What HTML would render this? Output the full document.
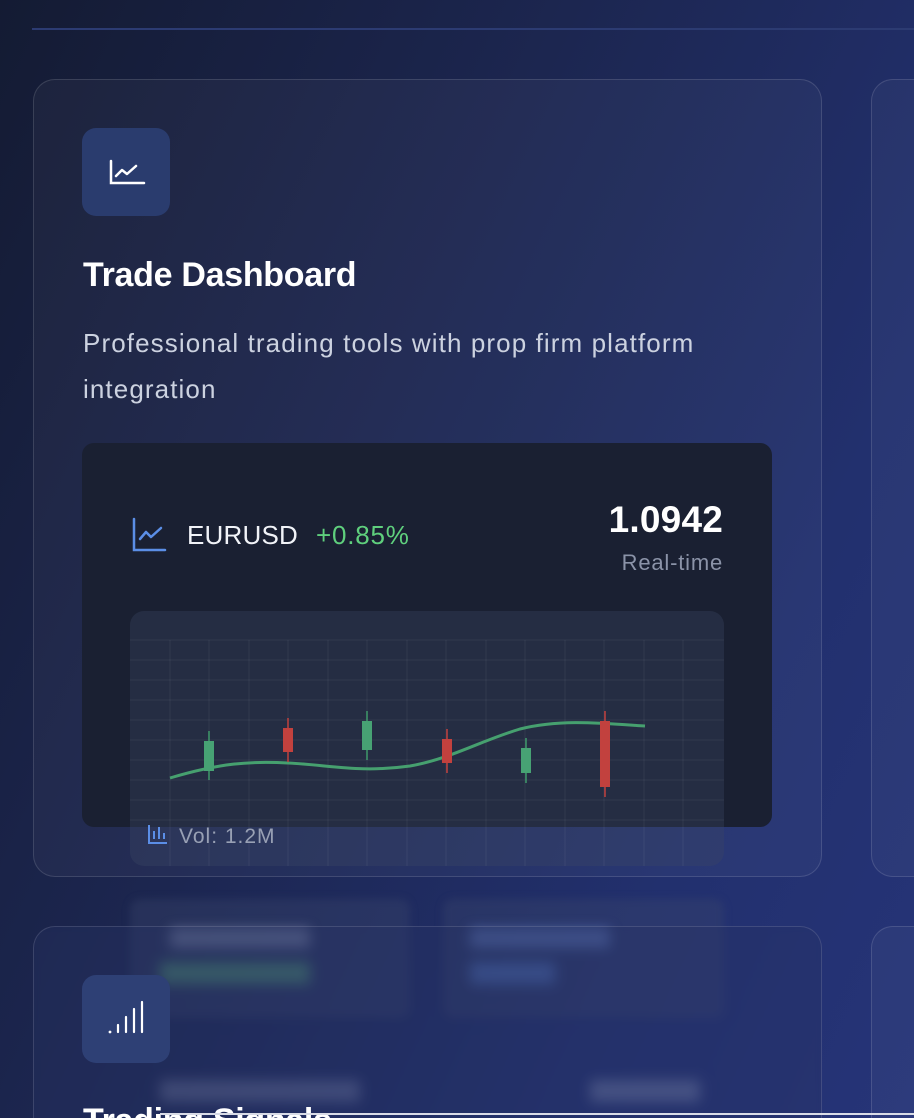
<!DOCTYPE html>
<html style="width:914px;height:1118px;overflow:hidden"><head><meta charset="utf-8"><style>
*{margin:0;padding:0;box-sizing:border-box}
body{width:914px;height:1118px;overflow:hidden;font-family:"Liberation Sans",sans-serif;background:#1c2650;color:#fff}
#w{position:relative;width:914px;height:1118px;overflow:hidden;background:linear-gradient(115deg,#141b33 0%,#1c2650 40%,#22306e 75%,#263478 100%)}
.topline{position:absolute;left:32px;top:28px;right:0;height:2px;background:#2c3b72}
.card{position:absolute;border:1.5px solid rgba(255,255,255,0.13);border-radius:22px;background:rgba(255,255,255,0.035)}
.ibox{position:absolute;width:88px;height:88px;border-radius:14px;background:#2a3c6e}
.t{position:absolute;font-weight:bold;font-size:34px;letter-spacing:-0.3px}
.d{position:absolute;font-size:26px;letter-spacing:1.1px;line-height:46px;color:#ccd2e0;white-space:nowrap}
.panel{position:absolute;left:82px;top:443px;width:690px;height:384px;border-radius:12px;background:#1a2032}
.chart{position:absolute;left:130px;top:611px;width:594px;height:255px;border-radius:14px;background:rgba(60,72,100,0.35);overflow:hidden}
.stat{position:absolute;border-radius:10px;background:rgba(60,72,110,0.35);filter:blur(4px)}
</style></head><body><div id="w">
<div class="topline"></div>
<div class="card" style="left:33px;top:79px;width:789px;height:798px"></div>
<div class="card" style="left:871px;top:79px;width:100px;height:798px"></div>
<div class="ibox" style="left:82px;top:128px"><svg width="88" height="88" viewBox="0 0 88 88"><path d="M29 33v22h33" stroke="#fff" stroke-width="2.5" fill="none" stroke-linecap="round"/><path d="M34 48l6-6 5 4 9-8" stroke="#fff" stroke-width="2.5" fill="none" stroke-linecap="round" stroke-linejoin="round"/></svg></div>
<div class="t" style="left:83px;top:256px">Trade Dashboard</div>
<div class="d" style="left:83px;top:320px">Professional trading tools with prop firm platform<br>integration</div>
<div class="panel"></div>
<svg style="position:absolute;left:131px;top:517px" width="36" height="36" viewBox="0 0 36 36"><path d="M3 2v31h31" stroke="#5b8ee6" stroke-width="2.5" fill="none" stroke-linecap="round"/><path d="M9 22l6-7 5 5 10-9" stroke="#5b8ee6" stroke-width="2.5" fill="none" stroke-linecap="round" stroke-linejoin="round"/></svg>
<div style="position:absolute;left:187px;top:520px;font-size:26px;letter-spacing:0.2px;color:#f1f3f8">EURUSD</div>
<div style="position:absolute;left:316px;top:520px;font-size:26px;letter-spacing:0.8px;color:#5fcf7d">+0.85%</div>
<div style="position:absolute;right:191px;top:499px;font-size:37px;font-weight:bold;letter-spacing:0.2px">1.0942</div>
<div style="position:absolute;right:191px;top:550px;font-size:22px;letter-spacing:0.8px;color:#8b93a8">Real-time</div>
<div class="chart">
<svg width="594" height="255" style="position:absolute;left:0;top:0">
<g stroke="rgba(255,255,255,0.06)" stroke-width="1">
<path d="M0 29H594M0 49H594M0 69H594M0 89H594M0 109H594M0 129H594M0 149H594M0 169H594M0 189H594M0 209H594"/>
<path d="M40 29V255M79 29V255M119 29V255M158 29V255M198 29V255M237 29V255M277 29V255M316 29V255M356 29V255M395 29V255M435 29V255M474 29V255M514 29V255M553 29V255"/>
</g>
<path d="M40 167C90 152 120 150 158 152C200 154 230 162 280 155C320 148 350 130 390 118C430 108 470 112 515 115" stroke="#46a06f" stroke-width="3" fill="none"/>
<g stroke-width="1.5">
<line x1="79" y1="120" x2="79" y2="169" stroke="#3f9a6b"/><rect x="74" y="130" width="10" height="30" fill="#47a274"/>
<line x1="158" y1="107" x2="158" y2="151" stroke="#c2413e"/><rect x="153" y="117" width="10" height="24" fill="#c2413e"/>
<line x1="237" y1="100" x2="237" y2="149" stroke="#3f9a6b"/><rect x="232" y="110" width="10" height="29" fill="#47a274"/>
<line x1="317" y1="118" x2="317" y2="162" stroke="#c2413e"/><rect x="312" y="128" width="10" height="24" fill="#c2413e"/>
<line x1="396" y1="127" x2="396" y2="172" stroke="#3f9a6b"/><rect x="391" y="137" width="10" height="25" fill="#47a274"/>
<line x1="475" y1="100" x2="475" y2="186" stroke="#c2413e"/><rect x="470" y="110" width="10" height="66" fill="#c2413e"/>
</g>
<g stroke="#5b8ee6" stroke-width="2" fill="none"><path d="M19 214v18h18M24 228v-8M29 228v-12M34 228v-6"/></g>
<text x="49" y="232" font-family="Liberation Sans" font-size="21" letter-spacing="1" fill="#98a0b4">Vol: 1.2M</text>
</svg>
</div>
<div class="stat" style="left:130px;top:899px;width:280px;height:119px"></div>
<div class="stat" style="left:443px;top:899px;width:281px;height:119px"></div>
<div style="position:absolute;left:170px;top:928px;width:140px;height:20px;background:rgba(160,170,200,0.4);filter:blur(6px)"></div>
<div style="position:absolute;left:160px;top:962px;width:150px;height:22px;background:rgba(90,180,120,0.45);filter:blur(6px)"></div>
<div style="position:absolute;left:470px;top:928px;width:140px;height:20px;background:rgba(110,140,210,0.45);filter:blur(6px)"></div>
<div style="position:absolute;left:470px;top:962px;width:85px;height:22px;background:rgba(90,130,210,0.45);filter:blur(6px)"></div>
<div style="position:absolute;left:160px;top:1080px;width:200px;height:22px;background:rgba(160,170,200,0.35);filter:blur(6px)"></div>
<div style="position:absolute;left:590px;top:1080px;width:110px;height:22px;background:rgba(160,170,200,0.4);filter:blur(6px)"></div>
<div class="card" style="left:33px;top:926px;width:789px;height:300px;background:rgba(40,52,100,0.35);backdrop-filter:blur(3px)"></div>
<div class="card" style="left:871px;top:926px;width:100px;height:300px"></div>
<div class="ibox" style="left:82px;top:975px;background:#2e4075"><svg width="88" height="88" viewBox="0 0 88 88"><g stroke="#fff" stroke-width="2.2" stroke-linecap="round"><path d="M36 50v7M44 42v15M52 34v23M60 27v30"/></g><circle cx="28" cy="57" r="1.4" fill="#fff"/></svg></div>
<div class="t" style="left:83px;top:1102px">Trading Signals</div>
<div style="position:absolute;left:160px;top:1113px;right:0;height:2px;background:#d8dbe6"></div>
</div></body></html>
